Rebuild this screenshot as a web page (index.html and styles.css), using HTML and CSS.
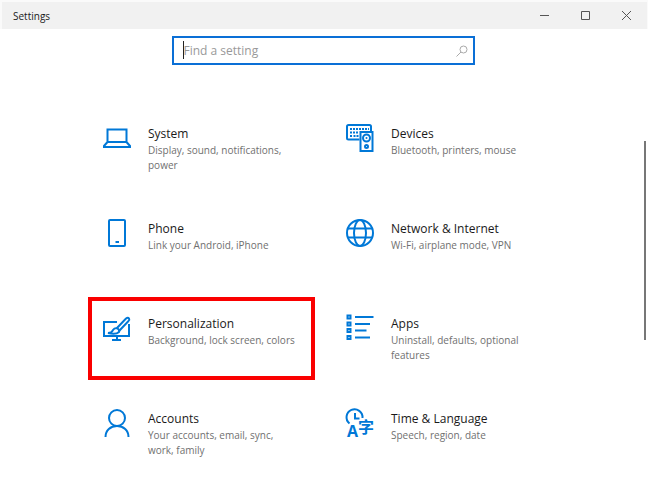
FILE: index.html
```html
<!DOCTYPE html>
<html lang="en">
<head>
<meta charset="utf-8">
<meta name="viewport" content="width=device-width, initial-scale=1">
<title>Settings</title>
<link rel="stylesheet" href="styles.css">
</head>
<body>

<header class="titlebar">
	<h1>Settings</h1>
	<div class="controls">
		<button type="button" aria-label="Minimize"><svg width="11" height="11" viewBox="0 0 11 11"><path d="M1 5.500h9"/></svg></button>
		<button type="button" aria-label="Maximize"><svg width="11" height="11" viewBox="0 0 11 11"><path d="M1.500 1.500h8v8h-8z"/></svg></button>
		<button type="button" aria-label="Close"><svg width="11" height="11" viewBox="0 0 11 11"><path d="M1 1l9 9M10 1l-9 9"/></svg></button>
	</div>
</header>

<div class="page">
	<main class="content">
		<form class="search" role="search">
			<span class="caret"></span>
			<input type="text" placeholder="Find a setting" aria-label="Find a setting">
			<button type="button" aria-label="Search"><svg width="12" height="12" viewBox="0 0 12 12"><circle cx="7.500" cy="4.500" r="3.500"/><path d="M5 7l-4.500 4.500"/></svg></button>
		</form>

		<nav class="list">
			<a class="item" href="#system">
				<svg class="icon" viewBox="0 0 28 28"><path d="M4.500 4.500h19v12.500h-19zM4.500 17L1 21v1h26v-1l-3.500-4"/></svg>
				<span class="text"><span class="name">System</span><span class="desc">Display, sound, notifications, power</span></span>
			</a>
			<a class="item" href="#devices">
				<svg class="icon" viewBox="0 0 28 28"><path d="M13.500 14.500H2.500q-1.500 0-1.500-1.500V1.500Q1 0 2.500 0h21q1.500 0 1.500 1.500V6"/><path d="M4 4h19M4 7.500h8M4 11h2M7.500 11h5" stroke-dasharray="2 1"/><path d="M14.500 7h12v19h-12z"/><circle cx="20.500" cy="13" r="3.500"/><circle class="dot" cx="20.500" cy="13" r="1"/><circle cx="20.500" cy="21.500" r="1.500"/></svg>
				<span class="text"><span class="name">Devices</span><span class="desc">Bluetooth, printers, mouse</span></span>
			</a>
			<a class="item" href="#phone">
				<svg class="icon" viewBox="0 0 28 28"><rect x="6" y="0" width="16" height="26" rx="1"/><path d="M12.500 22h3.500"/></svg>
				<span class="text"><span class="name">Phone</span><span class="desc">Link your Android, iPhone</span></span>
			</a>
			<a class="item" href="#network">
				<svg class="icon" viewBox="0 0 28 28"><circle cx="14" cy="13" r="13"/><ellipse cx="14" cy="13" rx="6" ry="13"/><path d="M2 8.500h24M2 17.500h24"/></svg>
				<span class="text"><span class="name">Network &amp; Internet</span><span class="desc">Wi-Fi, airplane mode, VPN</span></span>
			</a>
			<a class="item marked" href="#personalization">
				<svg class="icon" viewBox="0 0 28 28"><path d="M14 7H1v14h25V9M14 21v4M9 25h9"/><path d="M14 13l9-9.500q2-1.500 3 0 .8 1.500-.5 2.500L16.500 15.500"/><path d="M14 13q-3 0-4 2-1 3-5 3 8 2 11-1 1-2-2-4z"/></svg>
				<span class="text"><span class="name">Personalization</span><span class="desc">Background, lock screen, colors</span></span>
			</a>
			<a class="item" href="#apps">
				<svg class="icon" viewBox="0 0 28 28"><path d="M1.500 .5h3v3h-3zM1.500 7.500h3v3h-3zM1.500 14h3v3h-3zM1.500 21h3v3h-3zM9 2h18.500M9 9h15M9 15.500h11.500M9 22.500h15"/></svg>
				<span class="text"><span class="name">Apps</span><span class="desc">Uninstall, defaults, optional features</span></span>
			</a>
			<a class="item" href="#accounts">
				<svg class="icon" viewBox="0 0 28 28"><circle cx="14" cy="8" r="8"/><path d="M2.500 27c0-6.500 5-11 11.500-11s11.500 4.500 11.500 11"/></svg>
				<span class="text"><span class="name">Accounts</span><span class="desc">Your accounts, email, sync, work, family</span></span>
			</a>
			<a class="item" href="#time">
				<svg class="icon" viewBox="0 0 28 28"><path d="M3.500 13.500A8 8 0 1 1 16.500 8M9 3v5.500h4.500"/><text class="latin" x="1" y="27">A</text><text class="cjk" x="12" y="23">字</text></svg>
				<span class="text"><span class="name">Time &amp; Language</span><span class="desc">Speech, region, date</span></span>
			</a>
		</nav>
	</main>
	<div class="scroll"><div class="thumb"></div></div>
</div>

</body>
</html>
```
FILE: styles.css
```css
* {margin:0;padding:0;box-sizing:border-box;}

body {display:flex;flex-direction:column;min-height:100vh;background:#fff;color:#1a1a1a;font:12px/16px "Open Sans","Noto Sans",sans-serif;}
button {border:0;background:none;color:inherit;}
svg {display:block;fill:none;stroke:currentColor;}

.titlebar {display:flex;align-items:center;justify-content:space-between;height:29px;padding-left:11px;border:solid #fafafa;border-width:2px 1px 0 2px;background:#f1f1f1;background-clip:padding-box;}
.titlebar h1 {font-size:10px;font-weight:400;}
.controls {display:flex;}
.controls button {display:flex;align-items:center;justify-content:center;width:41px;height:27px;color:#555;}

.page {display:flex;flex:1;}
.content {flex:1;padding:7px 0 7px 2px;}

.search {display:flex;align-items:center;position:relative;width:calc(100% - 32px);max-width:303px;height:29px;margin:0 auto;border:2px solid #0a6fd6;}
.search input {flex:1;min-width:0;height:25px;padding-left:10px;border:0;outline:0;background:none;color:#1a1a1a;font:inherit;}
.search input::placeholder {color:#999;opacity:1;}
.search button {padding:0 5px;color:#aaa;}
.caret {position:absolute;left:9px;top:3px;width:1px;height:18px;background:#222;}

.list {display:grid;grid-template-columns:repeat(auto-fit,minmax(200px,1fr));gap:12px 16px;width:calc(100% - 32px);max-width:470px;margin:42px auto 0;}
.item {display:flex;gap:17px;min-height:83px;padding:14px 8px 8px 11px;border:4px solid transparent;color:#1a1a1a;text-decoration:none;}
.item.marked {border-color:#fa0000;}
.text {display:flex;flex-direction:column;flex:1;}
.name {font-size:12px;line-height:18px;}
.desc {max-width:152px;color:#707070;font-size:10px;line-height:15px;}

.icon {flex:none;width:28px;height:28px;overflow:visible;color:#0078d7;stroke-width:2;}
.icon .dot {fill:currentColor;stroke:none;}
.icon text {fill:currentColor;stroke:none;font-weight:700;}
.latin {font-family:"Open Sans",sans-serif;font-size:16px;}
.cjk {font-family:"Noto Sans CJK SC",sans-serif;font-size:16px;}

.scroll {width:4px;padding-top:112px;}
.thumb {width:2px;height:44vh;max-height:199px;background:#777;}
```
